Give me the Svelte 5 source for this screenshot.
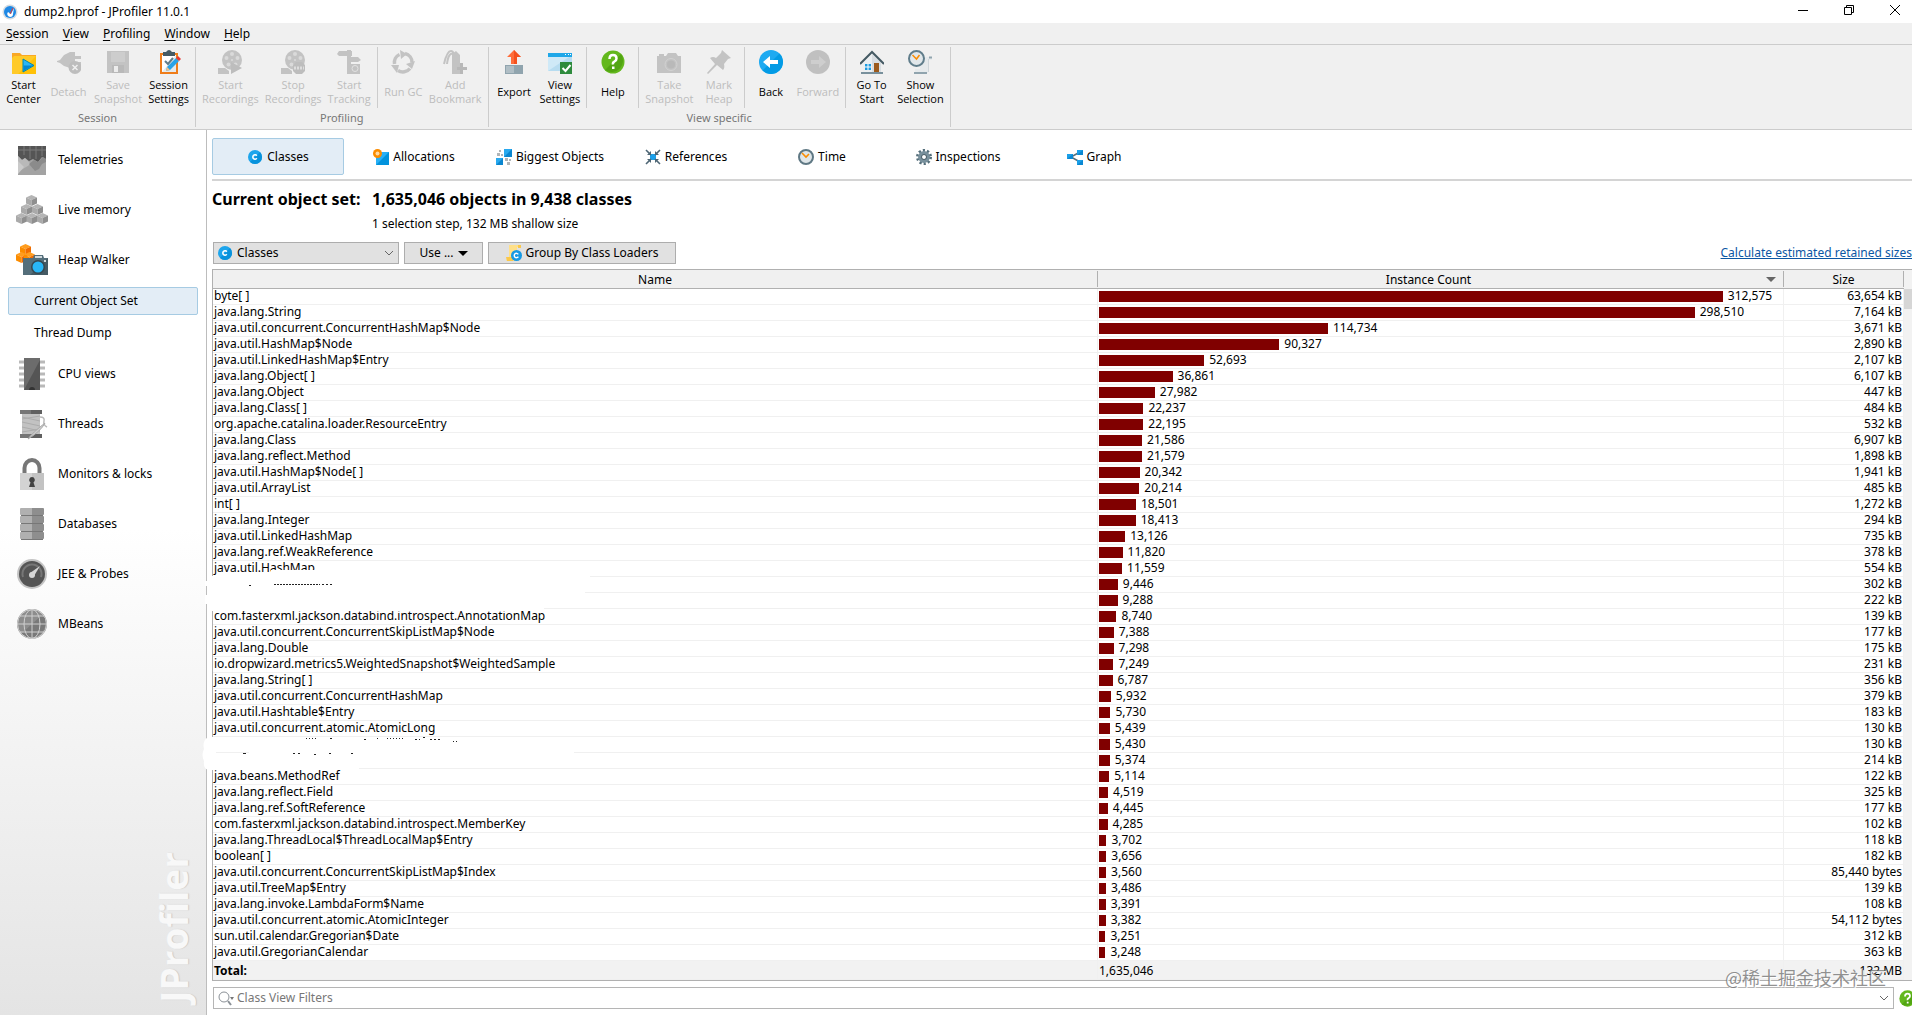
<script lang="ts">
  type Tool = { label: string; icon: string; off?: boolean };

  // each ribbon group holds one or more clusters, split by short separators
  const ribbon: { title: string; clusters: Tool[][] }[] = [
    {
      title: 'Session',
      clusters: [
        [
          { label: 'Start\nCenter', icon: 'start-center' },
          { label: 'Detach', icon: 'detach', off: true },
          { label: 'Save\nSnapshot', icon: 'save', off: true },
          { label: 'Session\nSettings', icon: 'session-settings' }
        ]
      ]
    },
    {
      title: 'Profiling',
      clusters: [
        [
          { label: 'Start\nRecordings', icon: 'record-start', off: true },
          { label: 'Stop\nRecordings', icon: 'record-stop', off: true },
          { label: 'Start\nTracking', icon: 'tracking', off: true }
        ],
        [
          { label: 'Run GC', icon: 'gc', off: true },
          { label: 'Add\nBookmark', icon: 'bookmark', off: true }
        ]
      ]
    },
    {
      title: 'View specific',
      clusters: [
        [
          { label: 'Export', icon: 'export' },
          { label: 'View\nSettings', icon: 'view-settings' }
        ],
        [{ label: 'Help', icon: 'help' }],
        [
          { label: 'Take\nSnapshot', icon: 'camera', off: true },
          { label: 'Mark\nHeap', icon: 'pin', off: true }
        ],
        [
          { label: 'Back', icon: 'back' },
          { label: 'Forward', icon: 'forward', off: true }
        ],
        [
          { label: 'Go To\nStart', icon: 'home' },
          { label: 'Show\nSelection', icon: 'selection' }
        ]
      ]
    }
  ];

  const menus = ['Session', 'View', 'Profiling', 'Window', 'Help'];

  const sections = [
    { label: 'Telemetries', icon: 'telemetries' },
    { label: 'Live memory', icon: 'memory' },
    { label: 'Heap Walker', icon: 'heap', children: ['Current Object Set', 'Thread Dump'] },
    { label: 'CPU views', icon: 'cpu' },
    { label: 'Threads', icon: 'threads' },
    { label: 'Monitors & locks', icon: 'lock' },
    { label: 'Databases', icon: 'database' },
    { label: 'JEE & Probes', icon: 'probe' },
    { label: 'MBeans', icon: 'globe' }
  ];
  let activeChild = $state('Current Object Set');

  const tabs = [
    { label: 'Classes', icon: 'class' },
    { label: 'Allocations', icon: 'allocations' },
    { label: 'Biggest Objects', icon: 'biggest' },
    { label: 'References', icon: 'references' },
    { label: 'Time', icon: 'clock' },
    { label: 'Inspections', icon: 'gear' },
    { label: 'Graph', icon: 'graph' }
  ];
  let activeTab = $state('Classes');
  let filter = $state('');

  const rows: [string, number, string][] = [
    ['byte[ ]', 312575, '63,654 kB'],
    ['java.lang.String', 298510, '7,164 kB'],
    ['java.util.concurrent.ConcurrentHashMap$Node', 114734, '3,671 kB'],
    ['java.util.HashMap$Node', 90327, '2,890 kB'],
    ['java.util.LinkedHashMap$Entry', 52693, '2,107 kB'],
    ['java.lang.Object[ ]', 36861, '6,107 kB'],
    ['java.lang.Object', 27982, '447 kB'],
    ['java.lang.Class[ ]', 22237, '484 kB'],
    ['org.apache.catalina.loader.ResourceEntry', 22195, '532 kB'],
    ['java.lang.Class', 21586, '6,907 kB'],
    ['java.lang.reflect.Method', 21579, '1,898 kB'],
    ['java.util.HashMap$Node[ ]', 20342, '1,941 kB'],
    ['java.util.ArrayList', 20214, '485 kB'],
    ['int[ ]', 18501, '1,272 kB'],
    ['java.lang.Integer', 18413, '294 kB'],
    ['java.util.LinkedHashMap', 13126, '735 kB'],
    ['java.lang.ref.WeakReference', 11820, '378 kB'],
    ['java.util.HashMap', 11559, '554 kB'],
    ['', 9446, '302 kB'],
    ['', 9288, '222 kB'],
    ['com.fasterxml.jackson.databind.introspect.AnnotationMap', 8740, '139 kB'],
    ['java.util.concurrent.ConcurrentSkipListMap$Node', 7388, '177 kB'],
    ['java.lang.Double', 7298, '175 kB'],
    ['io.dropwizard.metrics5.WeightedSnapshot$WeightedSample', 7249, '231 kB'],
    ['java.lang.String[ ]', 6787, '356 kB'],
    ['java.util.concurrent.ConcurrentHashMap', 5932, '379 kB'],
    ['java.util.Hashtable$Entry', 5730, '183 kB'],
    ['java.util.concurrent.atomic.AtomicLong', 5439, '130 kB'],
    ['', 5430, '130 kB'],
    ['', 5374, '214 kB'],
    ['java.beans.MethodRef', 5114, '122 kB'],
    ['java.lang.reflect.Field', 4519, '325 kB'],
    ['java.lang.ref.SoftReference', 4445, '177 kB'],
    ['com.fasterxml.jackson.databind.introspect.MemberKey', 4285, '102 kB'],
    ['java.lang.ThreadLocal$ThreadLocalMap$Entry', 3702, '118 kB'],
    ['boolean[ ]', 3656, '182 kB'],
    ['java.util.concurrent.ConcurrentSkipListMap$Index', 3560, '85,440 bytes'],
    ['java.util.TreeMap$Entry', 3486, '139 kB'],
    ['java.lang.invoke.LambdaForm$Name', 3391, '108 kB'],
    ['java.util.concurrent.atomic.AtomicInteger', 3382, '54,112 bytes'],
    ['sun.util.calendar.Gregorian$Date', 3251, '312 kB'],
    ['java.util.GregorianCalendar', 3248, '363 kB']
  ];

  const fmt = (n: number) => n.toLocaleString('en-US');
  // the longest bar leaves room for its number
  const barWidth = (n: number) => (n / rows[0][1]) * 91.2;
</script>

{#snippet cube(x: number, y: number, a: string, b: string, c: string)}
  <g transform="translate({x} {y})">
    <path d="M5.500 0 11 2.500 5.500 5 0 2.500z" fill={a} />
    <path d="M0 2.500 5.500 5v6L0 8.500z" fill={b} />
    <path d="M11 2.500 5.500 5v6L11 8.500z" fill={c} />
  </g>
{/snippet}

{#snippet icon(name: string, size: number)}
  <svg width={size} height={size} viewBox="0 0 {size > 24 ? 32 : size > 16 ? 24 : 16} {size > 24 ? 32 : size > 16 ? 24 : 16}" aria-hidden="true">
    {#if name === 'start-center'}
      <path d="M0 3h8l2 2h14v19H0z" fill="#f9a825" />
      <path d="M2 6h22v18H0V8z" fill="#ffca28" />
      <path d="M24 6v18H6z" fill="#ffc107" />
      <path d="M11 9v13l11-6.500z" fill="#29b6f6" stroke="#0288a8" />
      <path d="M11.500 15.500h10L11.500 21z" fill="#0288d1" />
    {:else if name === 'detach'}
      <path d="M0 11l3-1 4-5 6-3h5v4h6v3h-6v3h6v3h-6v3h-5l-6-2-4-3-3-1z" fill="#c3c3c3" />
      <circle cx="18" cy="17.500" r="6.500" fill="#bdbdbd" />
      <path d="m15.500 15 5 5m0-5-5 5" stroke="#f0f0f0" stroke-width="1.500" />
    {:else if name === 'save'}
      <path d="M1 1h22v22H1z" fill="#c3c3c3" />
      <path d="M5 2h14v10H5z" fill="#cdcdcd" />
      <path d="M6 15h12v8H6z" fill="#b9b9b9" />
      <path d="M8 16h4v6H8z" fill="#ececec" />
    {:else if name === 'session-settings'}
      <path d="M3 3h18v21H3z" fill="#ef7d1a" />
      <path d="M5 5h14v17H5z" fill="#fff" />
      <path d="M19 5v17H5z" fill="#e3eaee" />
      <path d="M6 2h3q3-4 6 0h3v4H6z" fill="#455a64" />
      <path d="m8 11 3 3 5-6" fill="none" stroke="#607d8b" stroke-width="2" />
      <path d="m9 21 1-4 9-9 3 3-9 9z" fill="#29a3e8" />
      <path d="m19 8 2-2 3 3-2 2z" fill="#e53935" />
      <path d="m9 21 1-4 3 3z" fill="#f5c28a" />
    {:else if name === 'record-start' || name === 'record-stop'}
      <circle cx="14" cy="10" r="10" fill="#c3c3c3" />
      <path d="M0 18h7l4 3v3H0z" fill="#c3c3c3" />
      <g fill="#dadada">
        <circle cx="14" cy="4" r="2" /><circle cx="8.500" cy="8" r="2" /><circle cx="19.500" cy="8" r="2" />
        <circle cx="10.500" cy="14.500" r="2" /><circle cx="17.500" cy="14.500" r="2" /><circle cx="14" cy="10" r="1" />
      </g>
      {#if name === 'record-start'}
        <path d="M13 12v12l11-6z" fill="#bdbdbd" />
      {:else}
        <path d="m15 12 6 0 3 3v6l-3 3h-6l-3-3v-6z" fill="#bdbdbd" />
        <path d="M13 18h10" stroke="#ddd" stroke-width="3" stroke-dasharray="2 1" />
      {/if}
    {:else if name === 'tracking'}
      <g fill="#c3c3c3">
        <path d="M0 4l2-3h8V0h4v1h1v5h-1v1h7l3 3-3 2h-7v12h-4V6H2z" />
        <path d="M10 14h13v10H10z" />
      </g>
      <circle cx="18" cy="18.500" r="3" fill="none" stroke="#e2e2e2" />
    {:else if name === 'gc'}
      <g fill="none" stroke="#c3c3c3" stroke-width="3.500">
        <path d="M3.500 14a9 9 0 0 1 5-9.500" /><path d="M14 3.500a9 9 0 0 1 7 9" /><path d="M19 18.500a9 9 0 0 1-12 2" />
      </g>
      <path d="m9 0 7 4-6 5zM24 11l-3 8-6-5zM0 15l8 0-2 8z" fill="#c3c3c3" />
    {:else if name === 'bookmark'}
      <path d="M1 14C3 5 5 1 8 1s3 4 4 13M4 14C5 6 7 3 10 4" fill="none" stroke="#c3c3c3" stroke-width="2" />
      <path d="M9 4l4-3 4 4v9h3v10h-11z" fill="#c3c3c3" />
      <path d="M17 13h3v4h4v3h-4v4h-3v-4h-3v-3h3z" fill="#b8b8b8" />
    {:else if name === 'export'}
      <path d="M12 0 19 7h-4v7H9V7H5z" fill="#ff6d3a" />
      <path d="M12 0 19 7h-4v7h-3z" fill="#f4511e" />
      <path d="M3 15h18v9H3z" fill="#90a4ae" />
      <path d="M4 16h8v7H4z" fill="#b0bec5" />
    {:else if name === 'view-settings'}
      <path d="M0 3h24v18H0z" fill="#cfe9f7" />
      <path d="M0 21 24 5v16z" fill="#b7dcf0" />
      <path d="M0 3h24v4H0z" fill="#1ea7e8" />
      <path d="M17 4h1v1h-1zM20 4h1v1h-1zM22 4h1v1h-1z" fill="#fff" />
      <path d="M12 12h12v12H12z" fill="#2e8b3d" />
      <path d="m14.500 18 3 3 5-6" fill="none" stroke="#fff" stroke-width="2" />
    {:else if name === 'help'}
      <circle cx="12" cy="12" r="11.500" fill="#63b81d" />
      <path d="M4 20A11.500 11.500 0 0 0 20 4z" fill="#52a512" />
      <path d="M8.500 9q0-4 3.500-4t3.500 3.500q0 2-2 3T12 14.500" fill="none" stroke="#fff" stroke-width="2.500" />
      <path d="M11 16.500h2.500V19H11z" fill="#fff" />
    {:else if name === 'camera'}
      <path d="M0 6h9l2-3h8l2 3h3v17H0zM2 4h5v2H2z" fill="#c3c3c3" />
      <circle cx="14" cy="14.500" r="6" fill="none" stroke="#d2d2d2" />
      <circle cx="14" cy="14.500" r="4" fill="#b9b9b9" />
    {:else if name === 'pin'}
      <path d="m15 0 9 8-3 1-4 5q1 4-1 6l-6-5-9 9-1-1 8-9-5-6q3-2 6 0l5-5z" fill="#c3c3c3" />
    {:else if name === 'back'}
      <circle cx="12" cy="12" r="12" fill="#1eaaf1" />
      <path d="M3.500 20.500A12 12 0 0 0 20.500 3.500z" fill="#039be5" />
      <path d="m4 12 7-6v4h8v4h-8v4z" fill="#fff" />
    {:else if name === 'forward'}
      <circle cx="12" cy="12" r="12" fill="#c0c0c0" />
      <path d="m20 12-7-6v4H5v4h8v4z" fill="#cecece" />
    {:else if name === 'home'}
      <path d="M3 12 12 4l9 8v11H3z" fill="#eceff1" />
      <path d="M12 4l9 8v11h-9z" fill="#d8dee2" />
      <path d="M0 14 12 2l12 12" fill="none" stroke="#455a64" stroke-width="2" />
      <path d="M5 14h6v6H5z" fill="#1e9be0" />
      <path d="M8 14v6M5 17h6" stroke="#fff" />
      <path d="M14 13h5v10h-5z" fill="#9c5a1c" />
      <path d="M1 23h22" stroke="#78909c" stroke-width="2" />
    {:else if name === 'selection'}
      <path d="M12 7h8v16H7v-4h5zM20 7h4v3h-4z" fill="#e6eaec" />
      <path d="M21 7.500h3M6 23h13" stroke="#90a4ae" stroke-width="2" />
      <path d="M20.500 9v13" stroke="#cfd6da" />
      <circle cx="8.500" cy="8.500" r="7.500" fill="#e1e7ea" stroke="#607d8b" stroke-width="2" />
      <path d="m4.500 5 4 4 3-4" fill="none" stroke="#fb8c00" stroke-width="1.500" />
    {:else if name === 'telemetries'}
      <path d="M2 2h28v29H2z" fill="#a3a3a3" />
      <path d="M2 2h28v13l-4-2-4 5-5-3-4 2-4-3-3 2-4-4z" fill="#555" />
      <path d="M8 2v9M14 2v13M20 2v13M26 2v10M2 6h28" stroke="#7a7a7a" />
      <path d="m2 12 4 4 3-2 6 6-13 8z" fill="#b9b9b9" />
      <path d="m2 30 6-7-6-6z" fill="#cacaca" />
      <path d="m13 20 5-4 4 2 5-5 3 2v3l-4 2-3 5-4 2z" fill="#8b8b8b" />
    {:else if name === 'memory'}
      {@render cube(10, 1, '#b5b5b5', '#aaa', '#8f8f8f')}
      {@render cube(5, 10, '#b5b5b5', '#aaa', '#8f8f8f')}
      {@render cube(16, 10, '#b5b5b5', '#aaa', '#8f8f8f')}
      {@render cube(0, 19, '#b5b5b5', '#aaa', '#8f8f8f')}
      {@render cube(10.500, 19, '#b5b5b5', '#aaa', '#8f8f8f')}
      {@render cube(21, 19, '#b5b5b5', '#aaa', '#8f8f8f')}
    {:else if name === 'heap'}
      {@render cube(4, 0, '#ff9d1e', '#fb8c00', '#ef6c00')}
      {@render cube(0, 8, '#ff9d1e', '#fb8c00', '#ef6c00')}
      {@render cube(8, 8, '#ff9d1e', '#fb8c00', '#ef6c00')}
      <path d="M7 14h10l1-3h9l1 3h4v17H7z" fill="#546e7a" />
      <path d="M32 14v17H14z" fill="#455a64" />
      <path d="M19 12h7v2h-7zM28 16h2v2h-2z" fill="#cfd8dc" />
      <circle cx="22" cy="23" r="7" fill="#37474f" />
      <circle cx="22" cy="23" r="5.500" fill="#29b6f6" />
    {:else if name === 'cpu'}
      <path d="M3 4h26M3 10h26M3 16h26M3 22h26M3 28h26" stroke="#b9b9b9" stroke-width="3" />
      <path d="M8 0h16v32H8z" fill="#6c6c6c" />
      <path d="M24 2v30H8z" fill="#555" />
      <path d="M13 32a3 3 0 0 1 6 0z" fill="#333" />
    {:else if name === 'threads'}
      <path d="M4 2h22v4H4zM4 26h22v4H4z" fill="#767676" />
      <path d="M15 2h11v4H15zM15 26h11v4H15z" fill="#606060" />
      <path d="M6 6h18v20H6z" fill="#c2c2c2" />
      <path d="m6 9 18 4M6 14l18 4M6 19l18 4M6 11l18-3M6 24l18-3" stroke="#acacac" />
      <path d="M24 9q5 0 4 4t3 6" fill="none" stroke="#bbb" stroke-width="1.500" />
      <path d="M29 15q-4 8-17 16 4-6 17-16z" fill="#ccc" stroke="#aaa" />
    {:else if name === 'lock'}
      <path d="M8.500 16v-6a7.500 8 0 0 1 15 0v6" fill="none" stroke="#777" stroke-width="4" />
      <path d="M4 15h24v17H4z" fill="#d3d3d3" />
      <path d="M16 15h12v17H16z" fill="#c3c3c3" />
      <path d="M16 19a3 3 0 0 1 1.500 5.500L19 29h-6l1.500-4.500A3 3 0 0 1 16 19z" fill="#424242" />
    {:else if name === 'database'}
      {#each [0, 8, 16, 24] as y}
        <rect x="4" {y} width="24" height="7" rx="1" fill="#b0b0b0" />
        <path d="M16 {y}h11l1 1v5l-1 1H16z" fill="#8e8e8e" />
        <path d="M5 {y + 7.5}h22" stroke="#777" />
      {/each}
    {:else if name === 'probe'}
      <circle cx="16" cy="16" r="15" fill="#c4c4c4" />
      <circle cx="16" cy="16" r="13" fill="#555" />
      <path d="M7 19a9.500 9.500 0 1 1 18 0" fill="none" stroke="#777" stroke-width="2" />
      <circle cx="16" cy="17" r="3" fill="#d6d6d6" />
      <path d="m14 15 10-7-6 10z" fill="#d6d6d6" />
    {:else if name === 'globe'}
      <circle cx="16" cy="16" r="15" fill="#8d8d8d" />
      <path d="M5 26A15 15 0 0 0 27 6z" fill="#797979" />
      <g fill="none" stroke="#cfcfcf">
        <circle cx="16" cy="16" r="14.500" />
        <ellipse cx="16" cy="16" rx="8" ry="14.500" />
        <path d="M16 1v30M1 16h30M4 8h24M4 24h24" />
      </g>
    {:else if name === 'class'}
      <circle cx="8" cy="8" r="7" fill="#1da5ec" />
      <path d="M3 13A7 7 0 0 0 13 3z" fill="#0892dc" />
      <path d="M9.800 6.700a2.200 2.200 0 1 0 0 2.600" fill="none" stroke="#fff" stroke-width="1.500" />
    {:else if name === 'allocations'}
      <path d="M3 3h13v13H3z" fill="#29b0f5" />
      <path d="M16 3v13H3z" fill="#0293dd" />
      <circle cx="4.500" cy="4.500" r="4.500" fill="#fb8c00" />
      <circle cx="4.500" cy="4.500" r="2" fill="#ffd9a0" />
    {:else if name === 'biggest'}
      <path d="M8 0h8v8H8zM0 9h7v7H0z" fill="#29a9ef" />
      <path d="M16 0v8H8zM7 9v7H0z" fill="#0b86cf" />
      <path d="M3 1h2v2H3zM1 4h3v3H1zM5 5h2v2H5zM9 9h3v3H9zM13 10h2v2h-2zM11 13h3v3h-3z" fill="#b0b5b8" />
    {:else if name === 'references'}
      <path d="M5 5h6v6H5z" fill="#1ca0ea" />
      <path d="m1 1 5 5m9-5-5 5M1 15l5-5m9 5-5-5" stroke="#4e6675" stroke-width="1.600" />
      <path d="M6 2v4H2zM10 2v4h4zM6 14v-4H2zM10 14v-4h4z" fill="#4e6675" />
    {:else if name === 'clock'}
      <circle cx="8" cy="8" r="7" fill="#dfe6e9" stroke="#5f7884" stroke-width="2" />
      <path d="m4 4 4 4 3-3" fill="none" stroke="#fb8c00" stroke-width="1.600" />
    {:else if name === 'gear'}
      <circle cx="8" cy="8" r="6.500" fill="none" stroke="#546e7a" stroke-width="3" stroke-dasharray="2.100 2" />
      <circle cx="8" cy="8" r="4.200" fill="#fff" stroke="#78909c" stroke-width="3.500" />
      <circle cx="8" cy="8" r="2.500" fill="none" stroke="#455a64" />
    {:else if name === 'graph'}
      <path d="M13 3 4 8l9 5" fill="none" stroke="#546e7a" stroke-width="1.500" />
      <path d="M0 5h6v5H0zM10 1h6v5h-6zM10 11h6v5h-6z" fill="#1a9fe8" />
      <path d="M6 5v5H0zM16 1v5h-6zM16 11v5h-6z" fill="#0b88d2" />
    {:else if name === 'loaders'}
      <path d="M3 0h11v2h-3v11q0 2-3 3H1q-1-1 0-3h2z" fill="#ffe08a" />
      <path d="M12 0h3v3h-3zM0 12h7v4H1z" fill="#fbc84a" />
      <circle cx="10.500" cy="10.500" r="5.500" fill="#1699e3" />
      <path d="M12.300 9.300a2.200 2.200 0 1 0 0 2.400" fill="none" stroke="#fff" stroke-width="1.400" />
    {:else if name === 'app'}
      <circle cx="8" cy="8" r="7.500" fill="#d5dce2" />
      <circle cx="8" cy="8" r="6" fill="#1e88e5" />
      <path d="M8 13a3 3 0 0 1-2-5l3 2 3-6-1 6a3 3 0 0 1-3 3z" fill="#fff" />
      <path d="m8 10 3-6" stroke="#e53935" />
    {:else if name === 'search'}
      <circle cx="6" cy="7" r="5" fill="none" stroke="#8b9197" />
      <path d="m10 11 3 4" stroke="#8b9197" stroke-width="2" />
      <path d="M12 7h4l-2 3z" fill="#777" />
    {/if}
  </svg>
{/snippet}

{#snippet chevron()}
  <svg width="10" height="6" viewBox="0 0 10 6" aria-hidden="true">
    <path d="m1 1 4 4 4-4" fill="none" stroke="#666" />
  </svg>
{/snippet}

<div class="window">
  <header class="titlebar">
    {@render icon('app', 16)}
    <h1>dump2.hprof - JProfiler 11.0.1</h1>
    <div class="controls">
      <button aria-label="Minimize"><svg width="10" height="10"><path d="M0 5.500h10" stroke="#000" /></svg></button>
      <button aria-label="Restore">
        <svg width="10" height="10"><path d="M.5 2.500h7v7h-7zM2.500 2.500v-2h7v7h-2" fill="none" stroke="#000" /></svg>
      </button>
      <button aria-label="Close"><svg width="10" height="10"><path d="m0 0 10 10M10 0 0 10" stroke="#000" /></svg></button>
    </div>
  </header>

  <nav class="menubar" aria-label="Menu">
    {#each menus as menu}
      <button><u>{menu[0]}</u>{menu.slice(1)}</button>
    {/each}
  </nav>

  <div class="ribbon">
    {#each ribbon as group}
      <section class="group">
        <div class="clusters">
          {#each group.clusters as cluster}
            <div class="cluster">
              {#each cluster as tool}
                <button class="tool" disabled={tool.off}>
                  {@render icon(tool.icon, 24)}
                  <span>{tool.label}</span>
                </button>
              {/each}
            </div>
          {/each}
        </div>
        <h2>{group.title}</h2>
      </section>
    {/each}
  </div>

  <div class="body">
    <aside class="sidebar">
      {#each sections as section}
        <button class="section">
          {@render icon(section.icon, 32)}
          {section.label}
        </button>
        {#if section.children}
          <div class="children">
            {#each section.children as child}
              <button class="child" class:active={child === activeChild} onclick={() => (activeChild = child)}>
                {child}
              </button>
            {/each}
          </div>
        {/if}
      {/each}
      <div class="brand">JProfiler</div>
    </aside>

    <main>
      <div class="tabs" role="tablist">
        {#each tabs as tab}
          <button
            class="tab"
            role="tab"
            class:active={tab.label === activeTab}
            aria-selected={tab.label === activeTab}
            onclick={() => (activeTab = tab.label)}
          >
            {@render icon(tab.icon, 16)}
            {tab.label}
          </button>
        {/each}
      </div>

      <div class="summary">
        <strong>Current object set:</strong>
        <strong>1,635,046 objects in 9,438 classes</strong>
        <span class="step">1 selection step, 132 MB shallow size</span>
      </div>

      <div class="actions">
        <label class="combo">
          {@render icon('class', 16)}
          <select aria-label="View mode">
            <option>Classes</option>
            <option>Packages</option>
          </select>
          {@render chevron()}
        </label>
        <button class="use">Use ... <i class="arrow"></i></button>
        <button class="by-loader">{@render icon('loaders', 16)}Group By Class Loaders</button>
        <a href="#retained">Calculate estimated retained sizes</a>
      </div>

      <div class="grid">
        <table>
          <colgroup>
            <col />
            <col class="col-count" />
            <col class="col-size" />
          </colgroup>
          <thead>
            <tr>
              <th><div><span>Name</span></div></th>
              <th><div><span>Instance Count</span><i class="arrow sort"></i></div></th>
              <th><div><span>Size</span></div></th>
            </tr>
          </thead>
          <tbody>
            {#each rows as [name, count, size]}
              <tr>
                <td>{name}</td>
                <td>
                  <div class="count">
                    <div class="bar" style="width: {barWidth(count)}%"></div>
                    {fmt(count)}
                  </div>
                </td>
                <td class="num">{size}</td>
              </tr>
            {/each}
          </tbody>
          <tfoot>
            <tr>
              <td><b>Total:</b></td>
              <td>1,635,046</td>
              <td class="num">132 MB</td>
            </tr>
          </tfoot>
        </table>
        <div class="scrollbar"><div class="thumb"></div></div>

        <!-- brushed-out class names -->
        <svg class="redact" width="400" height="530" viewBox="0 0 400 530" aria-hidden="true">
          <g fill="#fff">
            <path d="M69 301h319v22H10v-16h59z" />
            <path d="M10 322h373v6H342v14H10z" />
            <path d="M3 312h4v5H3zM3 326h4v9H3z" />
            <path d="M6 468h366v30H157v3H6q-5-2-4-9-3-6 0-12-2-8 4-12z" />
          </g>
          <path d="M14 483.500h33" stroke="#f0f0f0" />
          <g fill="none" stroke="#222">
            <path d="M47 316.500h3M72 315.500h46" stroke-dasharray="2 1" />
            <path d="M120 315.500h12" stroke-dasharray="2 2" />
            <path d="M104 469.500h10M175 469.500h2M185 469.500h18M251 472.500h5" stroke-dasharray="1 2" />
            <path d="M128 469.500h3M162 470.500h2M213 470.500h5M221 468.500h2M228 470.500h10" stroke-dasharray="2 2" />
            <path d="M41 484.500h3M91 484.500h2M96 484.500h2M112 485.500h2M127 484.500h2M149 484.500h2" />
          </g>
        </svg>
      </div>

      <div class="filter">
        <label>
          {@render icon('search', 16)}
          <input type="text" bind:value={filter} placeholder="Class View Filters" aria-label="Class View Filters" />
          {@render chevron()}
        </label>
        <button class="filter-help" aria-label="Help">{@render icon('help', 17)}</button>
      </div>
      <div class="watermark">@稀土掘金技术社区</div>
    </main>
  </div>
</div>

<style>
  :global(body) {
    margin: 0;
    overflow: hidden;
  }
  .window {
    display: flex;
    flex-direction: column;
    min-height: 100vh;
    background: #fff;
    color: #000;
    font: 12px/16px 'Noto Sans', 'Open Sans', 'Noto Sans CJK SC', sans-serif;
  }
  button,
  input,
  select {
    margin: 0;
    padding: 0;
    border: 0;
    background: none;
    color: inherit;
    font: inherit;
  }
  svg {
    flex: none;
    display: block;
  }
  h1,
  h2 {
    margin: 0;
    font-size: 12px;
    font-weight: 400;
  }

  .titlebar {
    display: flex;
    align-items: center;
    gap: 6px;
    height: 23px;
    padding-left: 2px;
  }
  .controls {
    display: flex;
    align-self: flex-start;
    margin: 0 -6px 0 auto;
  }
  .controls button {
    display: flex;
    align-items: center;
    justify-content: center;
    width: 46px;
    height: 20px;
  }

  .menubar {
    display: flex;
    gap: 14px;
    height: 21px;
    padding: 0 6px;
    background: #f0f0f0;
    border-bottom: 1px solid #ccc;
  }
  .menubar u {
    text-underline-offset: 2px;
  }

  .ribbon {
    display: flex;
    height: 84px;
    background: #f0f0f0;
    border-bottom: 1px solid #ccc;
  }
  .group {
    display: flex;
    flex-direction: column;
    margin: 2px 0;
    border-right: 1px solid #ccc;
  }
  .group h2 {
    margin-top: 1px;
    text-align: center;
    font-size: 11px;
    line-height: 18px;
    color: #777;
  }
  .clusters {
    display: flex;
    height: 63px;
  }
  .cluster {
    display: flex;
    padding: 0 3px;
  }
  .group:first-child .cluster {
    padding-left: 1px;
  }
  .cluster + .cluster {
    border-left: 1px solid #ccc;
  }
  .tool {
    display: flex;
    flex-direction: column;
    align-items: center;
    min-width: 45px;
    padding: 3px 3px 0;
    font-family: 'Open Sans', 'Noto Sans', sans-serif;
  }
  .tool span {
    display: flex;
    align-items: center;
    height: 28px;
    margin-top: 4px;
    font-size: 11px;
    line-height: 14px;
    white-space: pre-line;
    text-align: center;
  }
  .tool:disabled {
    color: #bdbdbd;
  }

  .body {
    display: flex;
    flex: 1;
  }
  .sidebar {
    position: relative;
    flex: none;
    width: 207px;
    padding-top: 5px;
    box-sizing: border-box;
    background: linear-gradient(#fff 45%, #e4e4e4);
    border-right: 1px solid #bdbdbd;
  }
  .section {
    display: flex;
    align-items: center;
    gap: 10px;
    width: 100%;
    height: 50px;
    padding-left: 16px;
  }
  .children {
    display: flex;
    flex-direction: column;
    gap: 4px;
    padding: 2px 8px;
  }
  .child {
    height: 28px;
    padding-left: 25px;
    border: 1px solid transparent;
    border-radius: 2px;
    text-align: left;
  }
  .child.active,
  .tab.active {
    background: #e3edf6;
    border-color: #a6cbe3;
  }
  .brand {
    position: absolute;
    right: 12px;
    bottom: 12px;
    writing-mode: vertical-rl;
    rotate: 180deg;
    color: #f8f8f8;
    font: bold 37px/40px 'Open Sans', sans-serif;
    text-shadow: 0 1px 1px #c8c8c8;
  }

  main {
    position: relative;
    flex: 1;
    min-width: 0;
    padding: 8px 0 0 5px;
  }
  .tabs {
    display: flex;
    gap: 4px;
    padding-bottom: 4px;
    border-bottom: 2px solid #d4d4d4;
  }
  .tab {
    display: flex;
    align-items: center;
    justify-content: center;
    gap: 4px;
    width: 132px;
    height: 37px;
    border: 1px solid transparent;
    border-radius: 2px;
  }

  .summary {
    display: grid;
    grid-template-columns: 160px 1fr;
    row-gap: 5px;
    padding-top: 8px;
  }
  .summary strong {
    font-size: 16px;
    line-height: 20px;
    white-space: nowrap;
  }
  .step {
    grid-column: 2;
    line-height: 20px;
  }

  .actions {
    display: flex;
    align-items: center;
    gap: 5px;
    padding: 8px 0 5px 1px;
  }
  .actions button,
  .combo {
    display: flex;
    align-items: center;
    justify-content: center;
    gap: 4px;
    box-sizing: border-box;
    height: 22px;
    background: #e1e1e1;
    border: 1px solid #adadad;
  }
  .combo {
    width: 186px;
    padding: 0 4px 0 3px;
  }
  .combo select {
    flex: 1;
    appearance: none;
  }
  .actions .use {
    width: 79px;
  }
  .actions .by-loader {
    width: 188px;
  }
  .arrow {
    border: 5px solid transparent;
    border-top-color: #000;
    border-bottom: 0;
  }
  .actions a {
    margin-left: auto;
    color: #0b57a4;
  }

  .grid {
    position: relative;
    display: flex;
    border: 1px solid #b0b0b0;
    border-right: 0;
  }
  table {
    flex: 1;
    min-width: 0;
    table-layout: fixed;
    border-spacing: 0;
  }
  .col-count {
    width: 686px;
  }
  .col-size {
    width: 120px;
  }
  th {
    height: 18px;
    padding: 0;
    background: #f0f0f0;
    border-bottom: 1px solid #b0b0b0;
    font-weight: 400;
  }
  th div {
    display: flex;
    align-items: center;
    height: 16px;
    border-right: 1px solid #b0b0b0;
  }
  th span {
    flex: 1;
    padding-top: 2px;
  }
  .arrow.sort {
    margin: 0 7px;
    border-top-color: #666;
  }
  td {
    height: 15px;
    padding: 0 1px;
    border-right: 1px solid #f0f0f0;
    border-bottom: 1px solid #f0f0f0;
    line-height: 13px;
    vertical-align: top;
    white-space: nowrap;
  }
  .num {
    text-align: right;
  }
  td:nth-child(2) {
    padding-right: 0;
  }
  .count {
    display: flex;
    align-items: flex-start;
    gap: 5px;
    height: 15px;
  }
  .bar {
    height: 11px;
    margin-top: 2px;
    background: #800000;
  }
  tfoot td {
    height: 18px;
    background: #f2f2f2;
    vertical-align: middle;
  }
  .scrollbar {
    width: 8px;
    padding-top: 19px;
    background: #f2f2f2;
  }
  .thumb {
    height: 20px;
    background: #d6d6d6;
  }
  .redact {
    position: absolute;
    top: -1px;
    left: -11px;
  }

  .filter {
    display: flex;
    align-items: center;
    gap: 5px;
    padding: 6px 0 5px 1px;
    overflow: hidden;
  }
  .filter label {
    display: flex;
    flex: 1;
    align-items: center;
    gap: 3px;
    box-sizing: border-box;
    height: 22px;
    padding: 0 4px;
    border: 1px solid #b5b5b5;
  }
  .filter input {
    flex: 1;
    outline: 0;
  }
  .filter input::placeholder {
    color: #777;
    opacity: 1;
  }
  .filter-help {
    width: 13px;
  }
  .filter-help svg {
    overflow: visible;
  }
  .watermark {
    position: absolute;
    right: 26px;
    bottom: 26px;
    color: rgba(110, 110, 110, 0.75);
    font: 18px/24px 'Noto Sans CJK SC', sans-serif;
    text-shadow: 1px 1px 0 #fff;
  }
</style>
